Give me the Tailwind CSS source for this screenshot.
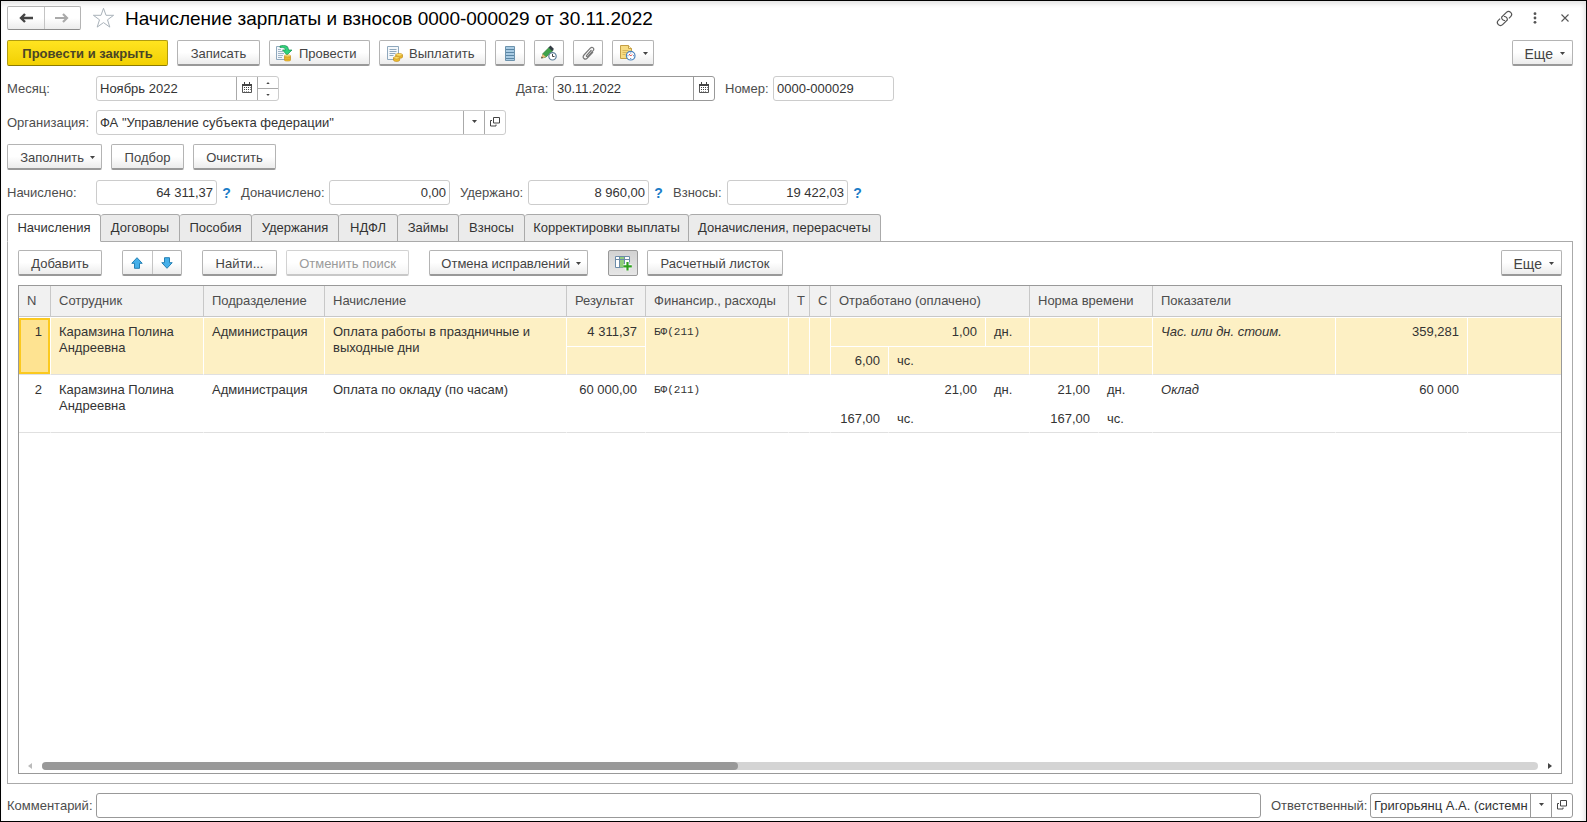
<!DOCTYPE html>
<html lang="ru">
<head>
<meta charset="utf-8">
<title>Начисление зарплаты и взносов</title>
<script src="https://cdn.jsdelivr.net/npm/@tailwindcss/browser@4"></script>
</head>
<body class="min-h-screen bg-white font-['Liberation_Sans',Arial,sans-serif] text-[13px] leading-4 text-[#333]">
<svg class="hidden" aria-hidden="true">
  <symbol id="cal" viewBox="0 0 10 11"><path d="M.5 2.500h9v8h-9z" fill="#fff" stroke="#555"/><path d="M0 2h10v2H0zM2 0h1v2H2zM7 0h1v2H7z" fill="#444"/><path d="M2 5h1v1H2zM4 5h1v1H4zM6 5h1v1H6zM8 5h.7v1H8zM2 7h1v1H2zM4 7h1v1H4zM6 7h1v1H6zM8 7h.7v1H8zM2 9h1v.6H2zM4 9h1v.6H4zM6 9h1v.6H6z" fill="#444"/></symbol>
  <symbol id="down" viewBox="0 0 5 3"><path d="M0 0h5L2.500 3z" fill="#444"/></symbol>
  <symbol id="up" viewBox="0 0 5 3"><path d="M0 3h5L2.500 0z" fill="#444"/></symbol>
  <symbol id="open" viewBox="0 0 10 10"><path d="M3.500.5h6v5.500h-6zM2 3.500H.5v5.500h5.500V7.500" fill="none" stroke="#444"/></symbol>
  <symbol id="coins" viewBox="0 0 9 8"><path d="M2.500 1.500v2.200C2.500 5 8.500 5 8.500 3.700V1.500M.5 4v2.300C.5 7.900 6 7.900 6 6.300V5" fill="#f2c230" stroke="#c08a1c" stroke-width=".7"/><ellipse cx="5.500" cy="1.600" rx="3" ry="1.200" fill="#ffe36b" stroke="#c08a1c" stroke-width=".6"/><ellipse cx="3.200" cy="4.300" rx="2.700" ry="1.100" fill="#ffe36b" stroke="#c08a1c" stroke-width=".6"/></symbol>
  <symbol id="stack" viewBox="0 0 8 8"><path d="M.5 1.500v5c0 1.300 7 1.300 7 0v-5" fill="#f5c636" stroke="#c08a1c" stroke-width=".7"/><path d="M.5 3c0 1.300 7 1.300 7 0M.5 4.800c0 1.300 7 1.300 7 0" fill="none" stroke="#c08a1c" stroke-width=".7"/><ellipse cx="4" cy="1.500" rx="3.500" ry="1.100" fill="#ffe98a" stroke="#c08a1c" stroke-width=".6"/></symbol>
</svg>

<div class="flex min-h-screen flex-col border border-black px-[6px] pt-[5px] pb-[3px] shadow-[inset_0_5px_5px_-2px_#e4e4e4,inset_-5px_0_5px_-3px_#e4e4e4]">
  <header class="flex h-6 items-center">
    <div class="flex h-6 w-[74px] overflow-hidden rounded-[2px] border border-[#b4b4b4] border-b-[#8d8d8d] bg-linear-to-b from-white from-50% to-[#ececec]">
      <button class="grid flex-1 place-items-center border-r border-[#c4c4c4]" aria-label="Назад"><svg width="14" height="10" viewBox="0 0 14 10"><path d="M14 5H3M6 1L2 5l4 4" fill="none" stroke="#444" stroke-width="2.400"/></svg></button>
      <button class="grid flex-1 place-items-center" aria-label="Вперёд"><svg width="14" height="10" viewBox="0 0 14 10"><path d="M0 5h11M8 1l4 4-4 4" fill="none" stroke="#aaa" stroke-width="2.200"/></svg></button>
    </div>
    <button class="ml-[11px]" aria-label="В избранное"><svg width="23" height="22" viewBox="0 0 23 22"><path d="M11.500 1.300l2.500 7h7.600l-6.100 4.500 2.300 7.300-6.300-4.500-6.300 4.500 2.300-7.300L1.400 8.300H9z" fill="#fff" stroke="#a9b2ba"/></svg></button>
    <h1 class="ml-[10px] flex-1 pt-0.5 text-[19px] leading-6 whitespace-nowrap text-black">Начисление зарплаты и взносов 0000-000029 от 30.11.2022</h1>
    <button class="mr-5" aria-label="Ссылка"><svg width="17" height="17" viewBox="0 0 17 17" fill="none" stroke="#555" stroke-width="1.200"><g transform="rotate(-45 8.500 8.500)"><path d="M7.500 10.300A3 3 0 0 1 7.500 5.500h6.700a3 3 0 0 1 0 6h-2.500"/><path d="M9.500 6.700a3 3 0 0 1 0 4.800H2.800a3 3 0 0 1 0-6h2.500" /></g></svg></button>
    <button class="mr-6" aria-label="Меню"><svg width="4" height="12" viewBox="0 0 4 12" fill="#555"><circle cx="2" cy="1.700" r="1.400"/><circle cx="2" cy="6" r="1.400"/><circle cx="2" cy="10.300" r="1.400"/></svg></button>
    <button class="mr-[11px]" aria-label="Закрыть"><svg width="8" height="8" viewBox="0 0 8 8"><path d="M.5.5l7 7M7.500.5l-7 7" stroke="#555" stroke-width="1.100"/></svg></button>
  </header>

  <div class="mt-[10px] mr-[7px] flex h-[26px] gap-[9px]">
    <button class="w-[161px] rounded-[2px] border border-[#b09c10] border-b-[#8c7b00] bg-linear-to-b from-[#ffe41f] to-[#f2d000] pt-px font-bold text-[#4a4526]">Провести и закрыть</button>
    <button class="w-[83px] rounded-[2px] border border-[#b4b4b4] border-b-2 border-b-[#999] bg-linear-to-b from-white from-50% to-[#ececec] pt-0.5 text-[#444]">Записать</button>
    <button class="flex w-[101px] items-center rounded-[2px] border border-[#b4b4b4] border-b-2 border-b-[#999] bg-linear-to-b from-white from-50% to-[#ececec] pt-0.5 pl-1.5 text-[#444]">
      <svg class="mr-[7px]" width="16" height="17" viewBox="0 0 16 17"><path d="M.5 1.500h11v13H.5z" fill="#f2f6fa" stroke="#8fa8bd"/><path d="M2 4.500h3M2 6.500h5M2 8.500h6M2 10.500h5M2 12.500h4" stroke="#9fb4c6"/><path d="M4 1c5-1.500 8.500 0 8.500 4H16l-5 5-4.500-5h3C9.500 3 7.500 2 4 2.500z" fill="#2fd37a" stroke="#149450" stroke-width=".7"/><use href="#stack" x="8" y="9" width="7" height="8"/></svg>Провести</button>
    <button class="flex w-[107px] items-center rounded-[2px] border border-[#b4b4b4] border-b-2 border-b-[#999] bg-linear-to-b from-white from-50% to-[#ececec] pt-0.5 pl-[7px] text-[#444]">
      <svg class="mr-[6px]" width="16" height="16" viewBox="0 0 16 16"><path d="M.5.5h11v13H.5z" fill="#f4f8fb" stroke="#8fa8bd"/><path d="M2.500 3.500h7M2.500 5.500h7M2.500 7.500h6M2.500 9.500h4" stroke="#8fa8bd"/><use href="#coins" x="6" y="7" width="10" height="9"/></svg>Выплатить</button>
    <button class="grid w-[30px] place-items-center rounded-[2px] border border-[#b4b4b4] border-b-2 border-b-[#999] bg-linear-to-b from-white from-50% to-[#ececec] pt-px" aria-label="Журнал"><svg width="10" height="15" viewBox="0 0 10 15"><path d="M.5.5h9v14h-9z" fill="#a9cbe3" stroke="#6d93ad"/><path d="M1 3.500h8M1 6.500h8M1 9.500h8M1 12.500h8" stroke="#5a86a5"/></svg></button>
    <button class="grid w-[30px] place-items-center rounded-[2px] border border-[#b4b4b4] border-b-2 border-b-[#999] bg-linear-to-b from-white from-50% to-[#ececec]" aria-label="Изменения"><svg width="16" height="16" viewBox="0 0 16 16"><path d="M1 13l1-4.500L8.500 2l3.500 3.500L5 12z" fill="#3fa34a" stroke="#2b7533" stroke-width=".7"/><path d="M7.500 2.500L9.500.5 13 4l-2 2z" fill="#333c44"/><path d="M0 13.500L1.700 9 5 12z" fill="#e8b978"/><path d="M0 13.500l.8-2 1.200 1.200z" fill="#333"/><circle cx="11.500" cy="11.300" r="3.700" fill="#fff" stroke="#5d7f99" stroke-width="1.200"/><path d="M11.500 9v2.500h2" fill="none" stroke="#444"/></svg></button>
    <button class="grid w-[30px] place-items-center rounded-[2px] border border-[#b4b4b4] border-b-2 border-b-[#999] bg-linear-to-b from-white from-50% to-[#ececec]" aria-label="Файлы"><svg width="13" height="14" viewBox="0 0 13 14"><path d="M9.500 4L4.700 9.300c-.8.900.4 2 1.200 1.200l5.200-5.800c1.800-2.200-.8-4.500-2.800-2.500L2 9c-2.300 2.800 1 5.500 3.300 3.200L11 6" fill="none" stroke="#777" stroke-width="1.200"/></svg></button>
    <button class="flex w-[42px] items-center rounded-[2px] border border-[#b4b4b4] border-b-2 border-b-[#999] bg-linear-to-b from-white from-50% to-[#ececec] pt-px pl-[7px]" aria-label="Отчёты"><svg class="mr-[7px]" width="16" height="16" viewBox="0 0 16 16"><path d="M.5.5h8l3 3v10H.5z" fill="#f7dc83" stroke="#c59f45"/><path d="M8.500.5v3h3" fill="#fff3c4" stroke="#c59f45"/><path d="M2.500 5.500h6M2.500 7.500h5M2.500 9.500h3" stroke="#d9b75c"/><circle cx="10.700" cy="10.700" r="4.300" fill="#fff" stroke="#4b83bd" stroke-width="1.200"/><path d="M10.700 7.500v1M10.700 13v1M7.500 10.700h1M13 10.700h1" stroke="#4b83bd"/><path d="M9 9l1.700 2 1.500-1.500" fill="none" stroke="#d44"/></svg><svg width="5" height="3"><use href="#down"/></svg></button>
    <button class="ml-auto flex w-[61px] items-center justify-end rounded-[2px] border border-[#b4b4b4] border-b-2 border-b-[#999] bg-linear-to-b from-white from-50% to-[#ececec] pt-0.5 pr-[7px] text-sm text-[#444]">Еще<svg class="ml-[7px]" width="5" height="3"><use href="#down"/></svg></button>
  </div>

  <div class="mt-[10px] flex h-[25px] items-center text-[#4d4d4d]">
    <label for="month" class="w-[89px]">Месяц:</label>
    <div class="flex h-full w-[183px] rounded-[3px] border border-[#ccc] text-[#333]">
      <input id="month" class="min-w-0 flex-1 px-[3px] outline-none" value="Ноябрь 2022">
      <button class="grid w-[21px] place-items-center border-l border-[#aaa] pb-0.5" aria-label="Выбрать месяц"><svg width="10" height="11"><use href="#cal"/></svg></button>
      <div class="flex w-[21px] flex-col border-l border-[#aaa]">
        <button class="grid flex-1 place-items-center border-b border-[#aaa]" aria-label="Следующий месяц"><svg width="4" height="2" ><use href="#up"/></svg></button>
        <button class="grid flex-1 place-items-center" aria-label="Предыдущий месяц"><svg width="4" height="2"><use href="#down"/></svg></button>
      </div>
    </div>
    <label for="date" class="ml-[237px] w-[37px]">Дата:</label>
    <div class="flex h-full w-[162px] rounded-[3px] border border-[#999] text-[#333]">
      <input id="date" class="min-w-0 flex-1 px-[3px] outline-none" value="30.11.2022">
      <button class="grid w-[21px] place-items-center border-l border-[#999] pb-0.5" aria-label="Выбрать дату"><svg width="10" height="11"><use href="#cal"/></svg></button>
    </div>
    <label for="num" class="ml-[10px] w-12">Номер:</label>
    <input id="num" class="h-full w-[121px] rounded-[3px] border border-[#ccc] px-[3px] text-[#333] outline-none" value="0000-000029">
  </div>

  <div class="mt-[9px] flex h-[25px] items-center text-[#4d4d4d]">
    <label for="org" class="w-[89px]">Организация:</label>
    <div class="flex h-full w-[410px] rounded-[3px] border border-[#ccc] text-[#333]">
      <input id="org" class="min-w-0 flex-1 px-[3px] outline-none" value="ФА &quot;Управление субъекта федерации&quot;">
      <button class="grid w-[21px] place-items-center border-l border-[#aaa] pb-0.5" aria-label="Список организаций"><svg width="5" height="3"><use href="#down"/></svg></button>
      <button class="grid w-[21px] place-items-center border-l border-[#aaa] pb-0.5" aria-label="Открыть организацию"><svg width="10" height="10"><use href="#open"/></svg></button>
    </div>
  </div>

  <div class="mt-[9px] flex h-[26px] gap-[9px] text-[#444]">
    <button class="flex w-[95px] items-center justify-end rounded-[2px] border border-[#b4b4b4] border-b-2 border-b-[#999] bg-linear-to-b from-white from-50% to-[#ececec] pt-0.5 pr-1.5">Заполнить<svg class="ml-[6px]" width="5" height="3"><use href="#down"/></svg></button>
    <button class="w-[73px] rounded-[2px] border border-[#b4b4b4] border-b-2 border-b-[#999] bg-linear-to-b from-white from-50% to-[#ececec] pt-0.5">Подбор</button>
    <button class="w-[83px] rounded-[2px] border border-[#b4b4b4] border-b-2 border-b-[#999] bg-linear-to-b from-white from-50% to-[#ececec] pt-0.5">Очистить</button>
  </div>

  <div class="mt-[10px] flex h-[25px] items-center text-[#4d4d4d]">
    <label for="s1" class="w-[89px]">Начислено:</label>
    <input id="s1" class="h-full w-[121px] rounded-[3px] border border-[#ccc] px-[3px] text-right text-[#333] outline-none" value="64 311,37">
    <button class="w-6 pr-[5px] text-center text-sm font-bold text-[#1a7cc7]">?</button>
    <label for="s2" class="w-[88px]">Доначислено:</label>
    <input id="s2" class="h-full w-[121px] rounded-[3px] border border-[#ccc] px-[3px] text-right text-[#333] outline-none" value="0,00">
    <label for="s3" class="ml-[10px] w-[68px]">Удержано:</label>
    <input id="s3" class="h-full w-[121px] rounded-[3px] border border-[#ccc] px-[3px] text-right text-[#333] outline-none" value="8 960,00">
    <button class="w-6 pr-[5px] text-center text-sm font-bold text-[#1a7cc7]">?</button>
    <label for="s4" class="w-[54px]">Взносы:</label>
    <input id="s4" class="h-full w-[121px] rounded-[3px] border border-[#ccc] px-[3px] text-right text-[#333] outline-none" value="19 422,03">
    <button class="w-6 pr-[5px] text-center text-sm font-bold text-[#1a7cc7]">?</button>
  </div>

  <div class="z-10 mt-[9px] -mb-px flex h-7 text-[#333]" role="tablist">
    <button role="tab" aria-selected="true" class="w-[94px] rounded-t-[3px] border border-[#aaa] border-b-white bg-white">Начисления</button>
    <button role="tab" class="w-[79px] rounded-t-[3px] border border-l-0 border-[#aaa] bg-[#ebebeb]">Договоры</button>
    <button role="tab" class="w-[72px] rounded-t-[3px] border border-l-0 border-[#aaa] bg-[#ebebeb]">Пособия</button>
    <button role="tab" class="w-[87px] rounded-t-[3px] border border-l-0 border-[#aaa] bg-[#ebebeb]">Удержания</button>
    <button role="tab" class="w-[59px] rounded-t-[3px] border border-l-0 border-[#aaa] bg-[#ebebeb]">НДФЛ</button>
    <button role="tab" class="w-[61px] rounded-t-[3px] border border-l-0 border-[#aaa] bg-[#ebebeb]">Займы</button>
    <button role="tab" class="w-[66px] rounded-t-[3px] border border-l-0 border-[#aaa] bg-[#ebebeb]">Взносы</button>
    <button role="tab" class="w-[164px] rounded-t-[3px] border border-l-0 border-[#aaa] bg-[#ebebeb]">Корректировки выплаты</button>
    <button role="tab" class="w-[192px] rounded-t-[3px] border border-l-0 border-[#aaa] bg-[#ebebeb]">Доначисления, перерасчеты</button>
  </div>

  <section class="mr-[7px] flex flex-1 flex-col border border-[#aaa] px-[10px] pt-2 pb-[9px]">
    <div class="flex h-[26px] text-[#444]">
      <button class="w-[84px] rounded-[2px] border border-[#b4b4b4] border-b-2 border-b-[#999] bg-linear-to-b from-white from-50% to-[#ececec] pt-0.5">Добавить</button>
      <div class="ml-5 flex w-[60px] rounded-[2px] border border-[#b4b4b4] border-b-2 border-b-[#999] bg-linear-to-b from-white from-50% to-[#ececec]">
        <button class="grid flex-1 place-items-center border-r border-[#c4c4c4]" aria-label="Переместить вверх"><svg width="12" height="12" viewBox="0 0 12 12"><path d="M6 .7l5.200 5.600H8.500v5h-5v-5H.8z" fill="#45b0ea" stroke="#2580b4"/></svg></button>
        <button class="grid flex-1 place-items-center" aria-label="Переместить вниз"><svg width="12" height="12" viewBox="0 0 12 12"><path d="M6 11.300L.8 5.700h2.700v-5h5v5h2.700z" fill="#45b0ea" stroke="#2580b4"/></svg></button>
      </div>
      <button class="ml-5 w-[75px] rounded-[2px] border border-[#b4b4b4] border-b-2 border-b-[#999] bg-linear-to-b from-white from-50% to-[#ececec] pt-0.5">Найти...</button>
      <button class="ml-[9px] w-[123px] rounded-[2px] border border-[#d2d2d2] border-b-2 border-b-[#c8c8c8] bg-linear-to-b from-white from-50% to-[#f4f4f4] pt-0.5 text-[#9a9a9a]" disabled>Отменить поиск</button>
      <button class="ml-5 flex w-[159px] items-center justify-end rounded-[2px] border border-[#b4b4b4] border-b-2 border-b-[#999] bg-linear-to-b from-white from-50% to-[#ececec] pt-0.5 pr-1.5">Отмена исправлений<svg class="ml-[6px]" width="5" height="3"><use href="#down"/></svg></button>
      <button class="ml-5 grid w-[30px] place-items-center rounded-[2px] border border-[#999] bg-linear-to-b from-[#d2d2d2] to-[#e6e6e6]" aria-label="Показать колонки"><svg width="17" height="15" viewBox="0 0 17 15"><path d="M.5.5h14v11H.5z" fill="#fff" stroke="#6b8ba8"/><path d="M5 1h4.500v10.500H5z" fill="#8fce7c"/><path d="M1 3.500h13M4.500 1v10.500M9.500 1v10.500" stroke="#6b8ba8"/><path d="M12.500 6v8.500M8.300 10.300h8.500" stroke="#fff" stroke-width="4"/><path d="M12.500 6v8.500M8.300 10.300h8.500" stroke="#2ea01e" stroke-width="2.200"/></svg></button>
      <button class="ml-[9px] w-[136px] rounded-[2px] border border-[#b4b4b4] border-b-2 border-b-[#999] bg-linear-to-b from-white from-50% to-[#ececec] pt-0.5">Расчетный листок</button>
      <button class="ml-auto flex w-[61px] items-center justify-end rounded-[2px] border border-[#b4b4b4] border-b-2 border-b-[#999] bg-linear-to-b from-white from-50% to-[#ececec] pt-0.5 pr-[7px] text-sm">Еще<svg class="ml-[7px]" width="5" height="3"><use href="#down"/></svg></button>
    </div>

    <div class="mt-[9px] flex flex-1 flex-col border border-[#999]">
      <table class="w-full table-fixed border-separate border-spacing-0">
        <colgroup><col class="w-8"><col class="w-[153px]"><col class="w-[121px]"><col class="w-[242px]"><col class="w-[79px]"><col class="w-[143px]"><col class="w-[21px]"><col class="w-[21px]"><col class="w-[58px]"><col class="w-[97px]"><col class="w-11"><col class="w-[69px]"><col class="w-[54px]"><col class="w-[183px]"><col class="w-[132px]"><col></colgroup>
        <thead>
          <tr class="h-[31px] bg-[#f1f1f1] text-left text-[#4d4d4d] *:border-b *:border-[#c8c8c8] *:font-normal *:whitespace-nowrap">
            <th class="border-r px-2">N</th><th class="border-r px-2">Сотрудник</th><th class="border-r px-2">Подразделение</th><th class="border-r px-2">Начисление</th><th class="border-r px-2">Результат</th><th class="border-r px-2">Финансир., расходы</th>
            <th class="border-r pl-2">Т</th><th class="border-r pl-2">С</th>
            <th class="border-r px-2" colspan="3">Отработано (оплачено)</th><th class="border-r px-2" colspan="2">Норма времени</th><th class="px-2" colspan="3">Показатели</th>
          </tr>
        </thead>
        <tbody>
          <tr class="h-[29px] bg-[#fdf0c4] align-top *:border-t *:border-r *:border-white *:px-2 *:pt-1.5">
            <td rowspan="2" class="border-b border-b-[#e0e0e0]! bg-[#fee391] text-right shadow-[inset_0_0_0_2px_#fbc91f]">1</td>
            <td rowspan="2" class="border-b border-b-[#e0e0e0]!">Карамзина Полина Андреевна</td>
            <td rowspan="2" class="border-b border-b-[#e0e0e0]!">Администрация</td>
            <td rowspan="2" class="border-b border-b-[#e0e0e0]!">Оплата работы в праздничные и выходные дни</td>
            <td class="text-right">4 311,37</td>
            <td rowspan="2" class="border-b border-b-[#e0e0e0]! font-['Liberation_Mono',monospace] text-[11px]">БФ(211)</td>
            <td rowspan="2" class="border-b border-b-[#e0e0e0]!"></td><td rowspan="2" class="border-b border-b-[#e0e0e0]!"></td>
            <td colspan="2" class="text-right">1,00</td><td>дн.</td><td></td><td></td>
            <td rowspan="2" class="border-b border-b-[#e0e0e0]! italic">Час. или дн. стоим.</td>
            <td rowspan="2" class="border-b border-b-[#e0e0e0]! text-right">359,281</td>
            <td rowspan="2" class="border-r-0! border-b border-b-[#e0e0e0]!"></td>
          </tr>
          <tr class="h-[29px] bg-[#fdf0c4] align-top *:border-t *:border-r *:border-b *:border-white *:border-b-[#e0e0e0] *:px-2 *:pt-1.5">
            <td></td><td class="text-right">6,00</td><td colspan="2">чс.</td><td></td><td></td>
          </tr>
          <tr class="h-[29px] align-top *:border-r *:border-transparent *:px-2 *:pt-[7px]">
            <td rowspan="2" class="border-b border-b-[#e0e0e0]! text-right">2</td>
            <td rowspan="2" class="border-b border-b-[#e0e0e0]!">Карамзина Полина Андреевна</td>
            <td rowspan="2" class="border-b border-b-[#e0e0e0]!">Администрация</td>
            <td rowspan="2" class="border-b border-b-[#e0e0e0]!">Оплата по окладу (по часам)</td>
            <td class="text-right">60 000,00</td>
            <td rowspan="2" class="border-b border-b-[#e0e0e0]! font-['Liberation_Mono',monospace] text-[11px]">БФ(211)</td>
            <td rowspan="2" class="border-b border-b-[#e0e0e0]!"></td><td rowspan="2" class="border-b border-b-[#e0e0e0]!"></td>
            <td colspan="2" class="text-right">21,00</td><td>дн.</td><td class="text-right">21,00</td><td>дн.</td>
            <td rowspan="2" class="border-b border-b-[#e0e0e0]! italic">Оклад</td>
            <td rowspan="2" class="border-b border-b-[#e0e0e0]! text-right">60 000</td>
            <td rowspan="2" class="border-r-0! border-b border-b-[#e0e0e0]!"></td>
          </tr>
          <tr class="h-[29px] align-top *:border-r *:border-b *:border-transparent *:border-b-[#e0e0e0] *:px-2 *:pt-[7px]">
            <td></td><td class="text-right">167,00</td><td colspan="2">чс.</td><td class="text-right">167,00</td><td>чс.</td>
          </tr>
        </tbody>
      </table>
      <div class="mt-auto mb-[3px] flex h-2 items-center">
        <svg class="ml-[9px]" width="4" height="6"><path d="M4 0v6L0 3z" fill="#bbb"/></svg>
        <div class="ml-[10px] h-2 flex-1 rounded-full bg-[#d4d4d4]"><div class="h-2 rounded-full bg-[#999]" style="width:46.5%"></div></div>
        <svg class="mr-[9px] ml-[10px]" width="4" height="6"><path d="M0 0v6l4-3z" fill="#444"/></svg>
      </div>
    </div>
  </section>

  <footer class="mt-[9px] mr-[7px] flex h-[25px] items-center text-[#4d4d4d]">
    <label for="comment" class="w-[89px]">Комментарий:</label>
    <input id="comment" class="h-full min-w-0 flex-1 rounded-[3px] border border-[#999] px-[3px] outline-none">
    <label for="resp" class="ml-[10px] w-[99px]">Ответственный:</label>
    <div class="flex h-full w-[203px] rounded-[3px] border border-[#999] text-[#333]">
      <input id="resp" class="min-w-0 flex-1 pl-[3px] outline-none" value="Григорьянц А.А. (системн">
      <button class="grid w-[21px] place-items-center border-l border-[#999] pb-0.5" aria-label="Список ответственных"><svg width="5" height="3"><use href="#down"/></svg></button>
      <button class="grid w-[21px] place-items-center border-l border-[#999] pb-0.5" aria-label="Открыть ответственного"><svg width="10" height="10"><use href="#open"/></svg></button>
    </div>
  </footer>
</div>
</body>
</html>
